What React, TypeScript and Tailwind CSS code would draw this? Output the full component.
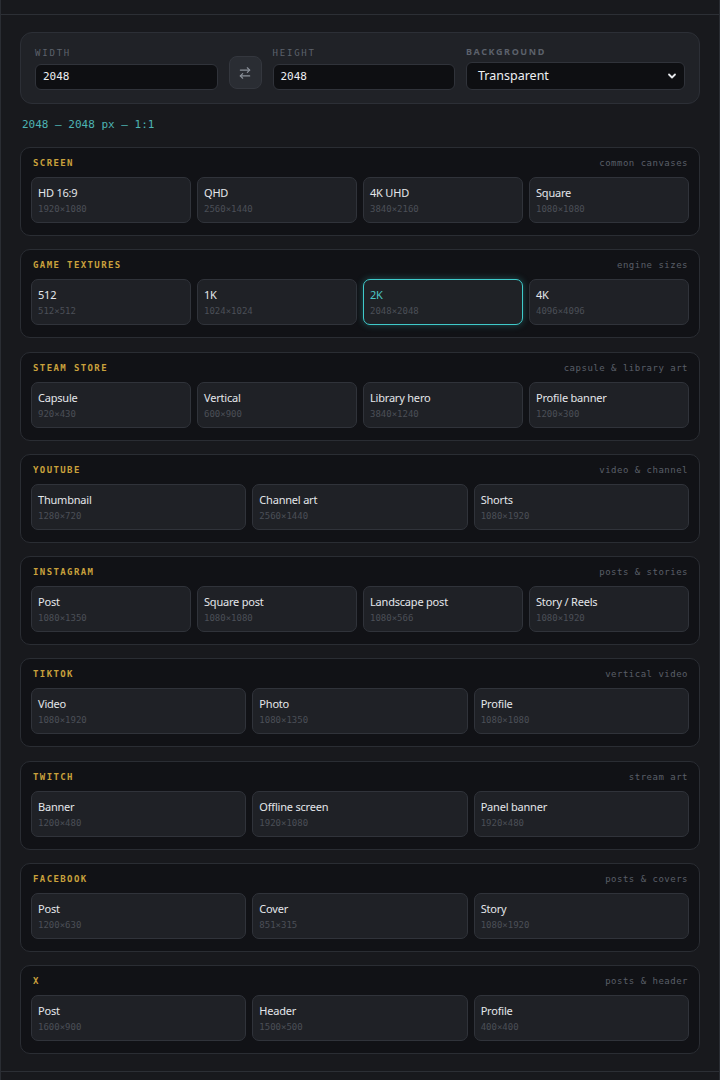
import React from "react";

type Preset = { name: string; size: string; active?: boolean };
type Section = { title: string; note: string; cols: 3 | 4; items: Preset[] };

const sections: Section[] = [
  {
    title: "SCREEN",
    note: "common canvases",
    cols: 4,
    items: [
      { name: "HD 16:9", size: "1920×1080" },
      { name: "QHD", size: "2560×1440" },
      { name: "4K UHD", size: "3840×2160" },
      { name: "Square", size: "1080×1080" },
    ],
  },
  {
    title: "GAME TEXTURES",
    note: "engine sizes",
    cols: 4,
    items: [
      { name: "512", size: "512×512" },
      { name: "1K", size: "1024×1024" },
      { name: "2K", size: "2048×2048", active: true },
      { name: "4K", size: "4096×4096" },
    ],
  },
  {
    title: "STEAM STORE",
    note: "capsule & library art",
    cols: 4,
    items: [
      { name: "Capsule", size: "920×430" },
      { name: "Vertical", size: "600×900" },
      { name: "Library hero", size: "3840×1240" },
      { name: "Profile banner", size: "1200×300" },
    ],
  },
  {
    title: "YOUTUBE",
    note: "video & channel",
    cols: 3,
    items: [
      { name: "Thumbnail", size: "1280×720" },
      { name: "Channel art", size: "2560×1440" },
      { name: "Shorts", size: "1080×1920" },
    ],
  },
  {
    title: "INSTAGRAM",
    note: "posts & stories",
    cols: 4,
    items: [
      { name: "Post", size: "1080×1350" },
      { name: "Square post", size: "1080×1080" },
      { name: "Landscape post", size: "1080×566" },
      { name: "Story / Reels", size: "1080×1920" },
    ],
  },
  {
    title: "TIKTOK",
    note: "vertical video",
    cols: 3,
    items: [
      { name: "Video", size: "1080×1920" },
      { name: "Photo", size: "1080×1350" },
      { name: "Profile", size: "1080×1080" },
    ],
  },
  {
    title: "TWITCH",
    note: "stream art",
    cols: 3,
    items: [
      { name: "Banner", size: "1200×480" },
      { name: "Offline screen", size: "1920×1080" },
      { name: "Panel banner", size: "1920×480" },
    ],
  },
  {
    title: "FACEBOOK",
    note: "posts & covers",
    cols: 3,
    items: [
      { name: "Post", size: "1200×630" },
      { name: "Cover", size: "851×315" },
      { name: "Story", size: "1080×1920" },
    ],
  },
  {
    title: "X",
    note: "posts & header",
    cols: 3,
    items: [
      { name: "Post", size: "1600×900" },
      { name: "Header", size: "1500×500" },
      { name: "Profile", size: "400×400" },
    ],
  },
];

const mono = "font-['DejaVu_Sans_Mono',monospace]";
const sans = "font-['Noto_Sans',sans-serif]";

function Tile({ p }: { p: Preset }) {
  return (
    <div
      className={
        "h-[46px] rounded-[7px] border px-[6px] pt-[8px] " +
        (p.active
          ? "border-[#3fcaca] bg-[#1f2226] shadow-[0_0_7px_rgba(63,202,202,0.35)]"
          : "border-[#30333a] bg-[#1f2126]")
      }
    >
      <div
        className={
          sans +
          " text-[11px] leading-[14px] tracking-[-0.2px] " +
          (p.active ? "text-[#4cc4c4]" : "text-[#e4e6ea]")
        }
      >
        {p.name}
      </div>
      <div className={mono + " mt-[3px] text-[9px] leading-[12px] text-[#4b4f57]"}>{p.size}</div>
    </div>
  );
}

function Card({ s }: { s: Section }) {
  return (
    <div className="rounded-[10px] border border-[#2a2d33] bg-[#111216] px-[10px] pt-[10px] pb-[12px]">
      <div className="mb-[8px] flex h-[11px] items-center justify-between pl-[2px] pr-[1px]">
        <span className={mono + " text-[9px] font-bold leading-[11px] tracking-[1.4px] text-[#c9a13c]"}>
          {s.title}
        </span>
        <span className={mono + " text-[9px] leading-[11px] tracking-[0.5px] text-[#5a5f68]"}>{s.note}</span>
      </div>
      <div className={"grid gap-[6px] " + (s.cols === 4 ? "grid-cols-4" : "grid-cols-3")}>
        {s.items.map((p) => (
          <Tile key={p.name + p.size} p={p} />
        ))}
      </div>
    </div>
  );
}

function SwapIcon() {
  return (
    <svg width="14" height="14" viewBox="0 0 24 24" fill="none" stroke="#8b919a" strokeWidth="2" strokeLinecap="round" strokeLinejoin="round">
      <path d="m16 3 4 4-4 4" />
      <path d="M20 7H4" />
      <path d="m8 21-4-4 4-4" />
      <path d="M4 17h16" />
    </svg>
  );
}

export default function App() {
  return (
    <div className="flex min-h-[1080px] flex-col border-x border-[#2a2d33] bg-[#18191d]">
      <div className="h-[15px] shrink-0 border-b border-[#2c2f35]" />
      <div className="flex flex-col px-[19px] pt-[17px] pb-[17px]">
        <div className="rounded-[12px] border border-[#2c2f36] bg-[#202227] px-[14px] pt-[13px] pb-[13px]">
          <div className="grid grid-cols-[1fr_33px_1fr_219px] items-end gap-[11px]">
            <div>
              <div className={mono + " mb-[5px] text-[9px] leading-[11px] tracking-[1.8px] text-[#5c616b]"}>WIDTH</div>
              <div className={mono + " flex h-[26px] items-center rounded-[6px] border border-[#30333a] bg-[#0e0f12] px-[7px] text-[11px] text-[#eef0f3]"}>
                2048
              </div>
            </div>
            <div className="mb-[1px] flex h-[33px] items-center justify-center rounded-[8px] border border-[#34373e] bg-[#2a2d33]">
              <SwapIcon />
            </div>
            <div>
              <div className={mono + " mb-[5px] text-[9px] leading-[11px] tracking-[1.8px] text-[#5c616b]"}>HEIGHT</div>
              <div className={mono + " flex h-[26px] items-center rounded-[6px] border border-[#30333a] bg-[#0e0f12] px-[7px] text-[11px] text-[#eef0f3]"}>
                2048
              </div>
            </div>
            <div>
              <div className={sans + " mb-[5px] text-[9px] font-bold leading-[11px] tracking-[1.6px] text-[#5c616b]"}>BACKGROUND</div>
              <div className="flex h-[28px] items-center justify-between rounded-[6px] border border-[#30333a] bg-[#0e0f12] pl-[11px] pr-[7px]">
                <span className={sans + " text-[12.5px] text-[#eef0f3]"}>Transparent</span>
                <svg width="10" height="10" viewBox="0 0 10 10" fill="none" stroke="#e6e8eb" strokeWidth="1.8" strokeLinecap="round" strokeLinejoin="round">
                  <path d="M2 3.5 5 6.5 8 3.5" />
                </svg>
              </div>
            </div>
          </div>
        </div>
        <div className={mono + " mt-[14px] pl-[2px] text-[11px] leading-[14px] text-[#4db3b3]"}>
          2048 — 2048 px — 1:1
        </div>
        <div className="mt-[15px] flex flex-col gap-[13.25px]">
          {sections.map((s) => (
            <Card key={s.title} s={s} />
          ))}
        </div>
      </div>
      <div className="h-[20px] border-t border-[#2c2f35]" />
    </div>
  );
}
